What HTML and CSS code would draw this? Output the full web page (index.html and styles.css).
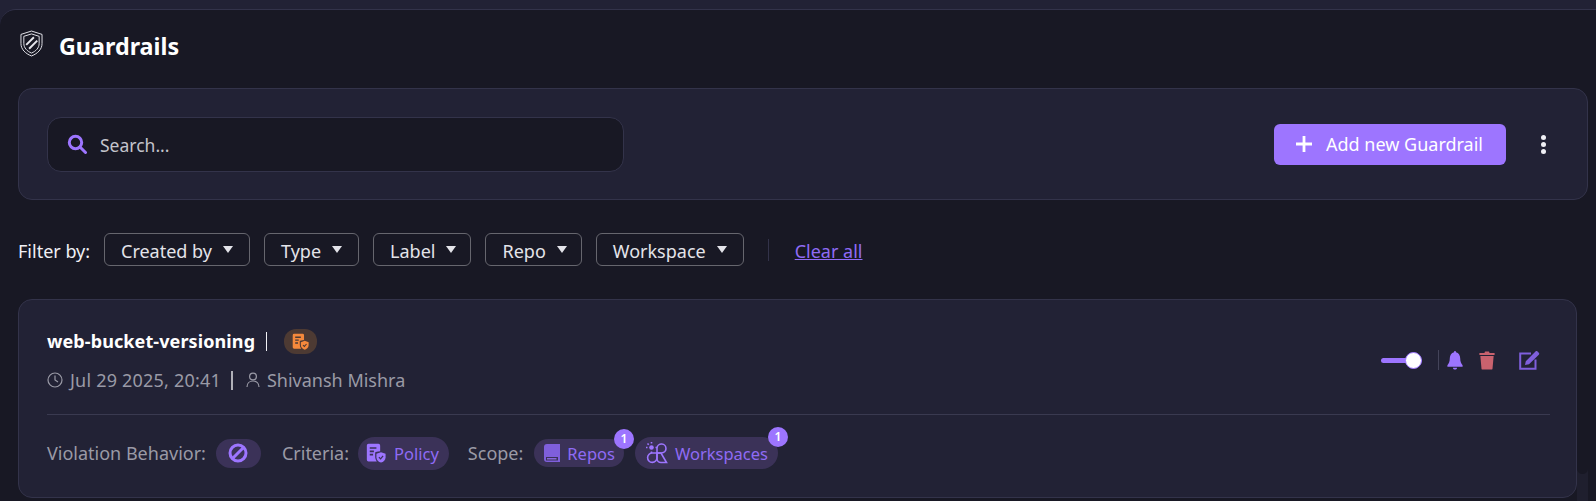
FILE: index.html
```html
<!DOCTYPE html>
<html>

<head>
<link rel="stylesheet" href="styles.css">
</head>

<body>
  <div class="panel">
    <div class="pagetitle">
      <svg class="titleicon" viewBox="0 0 24 28" fill="none" stroke="#e8e8ee" stroke-width="1">
        <path d="M12 1 L23 4.500 V14 C23 20 18.500 24.500 12 27 C5.500 24.500 1 20 1 14 V4.500 Z"/>
        <path d="M12 4 L20 6.500 V14 C20 18.600 16.600 22 12 24 C7.400 22 4 18.600 4 14 V6.500 Z"/>
        <path d="M6.500 15.500 L14.500 7.500 M9.500 19.500 L18 11" stroke-width="2"/>
      </svg>
      <h1>Guardrails</h1>
    </div>

    <div class="toolbar">
      <div class="searchbox">
        <svg class="searchicon" viewBox="0 0 20 20" fill="none" stroke="#9d75ff" stroke-width="3">
          <circle cx="8.500" cy="8.500" r="6.200"/>
          <path d="M13 13 L18.500 18.500" stroke-linecap="round"/>
        </svg>
        <span class="searchtext">Search...</span>
      </div>
      <div class="toolbaractions">
        <button class="addbutton">
          <svg viewBox="0 0 16 16" class="plusicon"><path d="M6.600 0h2.800v6.600H16v2.800H9.400V16H6.600V9.400H0V6.600h6.600z" fill="#fff"/></svg>
          Add new Guardrail
        </button>
        <span class="dots"><i></i><i></i><i></i></span>
      </div>
    </div>

    <div class="filters">
      <span class="filterlabel">Filter by:</span>
      <div class="filter">Created by <b></b></div>
      <div class="filter">Type <b></b></div>
      <div class="filter filtertight">Label <b></b></div>
      <div class="filter filtertight">Repo <b></b></div>
      <div class="filter">Workspace <b></b></div>
      <span class="filterdivider"></span>
      <a href="#clear" class="clearall">Clear all</a>
    </div>

    <div class="card">
      <div class="cardtop">
        <div>
          <div class="nameline">
            <strong>web-bucket-versioning</strong>
            <span class="namedivider"></span>
            <span class="typechip">
              <svg viewBox="0 0 24 24" class="typeicon">
                <path d="M3 1h12a2 2 0 0 1 2 2v7c-3 .3-6 1.200-6 1.200v5c0 2 .6 4 2 6H3a2 2 0 0 1-2-2V3a2 2 0 0 1 2-2z" fill="#f5893c"/>
                <path d="M4.500 6h8M4.500 10h5M4.500 14h4" stroke="#4d3a33" stroke-width="2"/>
                <path d="M18 11l5.500 2v4c0 3.500-2.500 5.500-5.500 6.500-3-1-5.500-3-5.500-6.500v-4z" fill="#f5893c"/>
                <path d="M15.500 17l2 2 3-3.500" stroke="#4d3a33" stroke-width="1.500" fill="none"/>
              </svg>
            </span>
          </div>
          <div class="metaline">
            <svg viewBox="0 0 16 16" class="metaicon" fill="none" stroke="#9a9aa6" stroke-width="1.200">
              <circle cx="8" cy="8" r="7"/>
              <path d="M8 3.500V8l3 2"/>
            </svg>
            <span class="metadate">Jul 29 2025, 20:41</span>
            <span class="metadivider"></span>
            <svg viewBox="0 0 14 16" class="usericon" fill="none" stroke="#9a9aa6" stroke-width="1.200">
              <circle cx="7" cy="4.500" r="3.400"/>
              <path d="M1 15c0-3.500 2.500-6 6-6s6 2.500 6 6"/>
            </svg>
            <span>Shivansh Mishra</span>
          </div>
        </div>
        <div class="cardactions">
          <span class="toggle"><i></i></span>
          <span class="actiondivider"></span>
          <svg viewBox="0 0 16 20" class="bell"><path d="M8 0c.7 0 1 .5 1 1.200C12 2 13.500 4.500 13.500 8c0 3 .8 5 2.500 7v1.500H0V15c1.700-2 2.500-4 2.500-7C2.500 4.500 4 2 7 1.200 7 .5 7.300 0 8 0zM5.800 17.500h4.400C10 19 9 19.600 8 19.600S6 19 5.800 17.500z" fill="#9d75ff"/></svg>
          <svg viewBox="0 0 16 20" class="trash"><path d="M5.500 1.500C5.500.8 6 .5 6.500.5h3c.5 0 1 .3 1 1V2H16v2.200H0V2h5.500zM1 5.200h14L13.800 18.600c-.1.600-.5 1-1.200 1H3.400c-.7 0-1.100-.4-1.200-1z" fill="#c9626e"/></svg>
          <svg viewBox="0 0 22 20" class="edit">
            <path d="M12 3.500H1.200v15.300h15.300V9.500" fill="none" stroke="#7f5fdc" stroke-width="2"/>
            <path d="M6 15l.8-3.800L16.500 1.500c.6-.6 1.500-.6 2 0l1.300 1.300c.6.600.6 1.400 0 2L10 14.300z" fill="#7f5fdc"/>
          </svg>
        </div>
      </div>

      <div class="cardbottom">
        <span class="fieldlabel">Violation Behavior:</span>
        <span class="chip chipviolation">
          <svg viewBox="0 0 20 20" class="chipicon" fill="none" stroke="#9d75ff" stroke-width="3">
            <circle cx="10" cy="10" r="8"/>
            <path d="M4.500 15.500L15.500 4.500"/>
          </svg>
        </span>
        <span class="fieldlabel criteria">Criteria:</span>
        <span class="chip chippolicy">
          <svg viewBox="0 0 24 24" class="chipicon">
            <path d="M3 1h12a2 2 0 0 1 2 2v7c-3 .3-6 1.200-6 1.200v5c0 2 .6 4 2 6H3a2 2 0 0 1-2-2V3a2 2 0 0 1 2-2z" fill="#9d75ff"/>
            <path d="M4.500 6h8M4.500 10h5M4.500 14h4" stroke="#3b3258" stroke-width="2"/>
            <path d="M18 11l5.500 2v4c0 3.500-2.500 5.500-5.500 6.500-3-1-5.500-3-5.500-6.500v-4z" fill="#9d75ff"/>
            <path d="M15.500 17l2 2 3-3.500" stroke="#3b3258" stroke-width="1.500" fill="none"/>
          </svg>
          Policy
        </span>
        <span class="fieldlabel scope">Scope:</span>
        <span class="chip chiprepos">
          <svg viewBox="0 0 16 18" class="repoicon">
            <path d="M3 0h13v18H3a3 3 0 0 1-3-3V3a3 3 0 0 1 3-3z" fill="#7f5fdc"/>
            <path d="M2 13h12v3.500H2z" fill="#3b3258"/>
            <path d="M3 14.200h9.500v1.200H3z" fill="#9d75ff"/>
          </svg>
          Repos
          <span class="countbadge">1</span>
        </span>
        <span class="chip chipworkspaces">
          <svg viewBox="0 0 22 22" class="workspaceicon" fill="none" stroke="#9d75ff" stroke-width="1.600">
            <circle cx="5.500" cy="5.500" r="2.300" fill="#9d75ff" stroke="none"/>
            <path d="M5.500 0v1.500M0 5.500h1.500M1.500 1.500l1.200 1.200M9.500 5.500h1.500M5.500 9.500V11"/>
            <path d="M11 11V6a4.500 4.500 0 1 1 4.500 5z"/>
            <path d="M11 11H6.500a4.700 4.700 0 1 0 4.500 4.700z"/>
            <path d="M11 11h4l5.500 9.500H15a4 4 0 0 1-4-4z"/>
          </svg>
          Workspaces
          <span class="countbadge">1</span>
        </span>
      </div>
    </div>
  </div>
  <div class="scrolltrack"></div>
</body>
</html>
```

FILE: styles.css
```css
* {
  box-sizing: border-box;
}

body {
  margin: 0;
  padding-top: 9px;
  background-color: #222235;
  font-family: "Noto Sans", "Open Sans", sans-serif;
  overflow: hidden;
  color: #fff;
}

/* Main dark panel */
.panel {
  height: 492px;
  padding: 0 8px 0 18px;
  background-color: #181824;
  border-top: 1px solid #33334a;
  border-top-left-radius: 16px;
}

.pagetitle {
  display: flex;
  align-items: center;
  gap: 16px;
  height: 78px;
  padding: 0 0 6px 2px;
}

.titleicon {
  width: 23px;
  height: 27px;
  margin-bottom: 5px;
}

.pagetitle h1 {
  margin: 0;
  font-size: 23.300px;
  font-weight: 700;
}

/* Search bar and add button */
.toolbar {
  display: flex;
  justify-content: space-between;
  align-items: center;
  height: 112px;
  padding: 0 41px 0 28px;
  background-color: #222235;
  border: 1px solid #33334a;
  border-radius: 14px;
}

.searchbox {
  display: flex;
  align-items: center;
  gap: 13px;
  width: 577px;
  height: 55px;
  padding: 0 19px;
  background-color: #181824;
  border: 1px solid #33334a;
  border-radius: 14px;
  color: #c4c4cc;
  font-size: 17.500px;
}

.searchtext {
  padding-top: 2px;
}

.searchicon {
  width: 20px;
  height: 20px;
}

.toolbaractions {
  display: flex;
  align-items: center;
  gap: 35px;
}

.addbutton {
  display: flex;
  align-items: center;
  gap: 14px;
  width: 232px;
  height: 41px;
  padding: 0 22px;
  background-color: #9d75ff;
  border: none;
  border-radius: 6px;
  color: #fff;
  font-family: inherit;
  font-size: 18px;
}

.plusicon {
  width: 16px;
  height: 16px;
}

.dots {
  display: flex;
  flex-direction: column;
  gap: 2px;
}

.dots i {
  width: 5px;
  height: 5px;
  border-radius: 50%;
  background-color: #f0f0f5;
}

/* Filter row */
.filters {
  display: flex;
  align-items: center;
  height: 99px;
  font-size: 18px;
  color: #f0f0f5;
}

.filterlabel {
  width: 86px;
  padding-top: 2px;
}

.filter {
  display: flex;
  align-items: center;
  justify-content: space-between;
  height: 33px;
  margin-right: 14px;
  padding: 2px 16px 0 16px;
  border: 1px solid #66666e;
  border-radius: 6px;
  color: #e4e4ea;
}

.filtertight {
  padding-right: 14px;
}

.filter b {
  width: 0;
  height: 0;
  margin-left: 11px;
  margin-top: -3px;
  border-left: 5px solid transparent;
  border-right: 5px solid transparent;
  border-top: 7px solid #e4e4ea;
}

.filterdivider {
  width: 1px;
  height: 22px;
  margin: 0 26px 0 10px;
  background-color: #33334a;
}

.clearall {
  padding-top: 2px;
  color: #8f6bf5;
}

/* Guardrail card */
.card {
  width: 1559px;
  height: 199px;
  padding: 0 26px 0 28px;
  background-color: #222235;
  border: 1px solid #33334a;
  border-radius: 14px;
}

.cardtop {
  display: flex;
  justify-content: space-between;
  align-items: center;
  height: 115px;
  padding-top: 6px;
  border-bottom: 1px solid #3a3a50;
}

.nameline {
  display: flex;
  align-items: center;
  height: 26px;
  font-size: 18px;
}

.nameline strong {
  font-weight: 700;
  letter-spacing: .1px;
}

.namedivider {
  width: 1px;
  height: 19px;
  margin: 0 17px 0 11px;
  background-color: #f0f0f5;
}

.typechip {
  display: flex;
  align-items: center;
  justify-content: center;
  width: 33px;
  height: 25px;
  border-radius: 12px;
  background-color: #4d3a33;
}

.typeicon {
  width: 17px;
  height: 17px;
}

.metaline {
  display: flex;
  align-items: center;
  margin-top: 14px;
  font-size: 18px;
  color: #9a9aa6;
}

.metadate {
  letter-spacing: .2px;
}

.metaicon {
  width: 16px;
  height: 16px;
  margin-right: 7px;
}

.metadivider {
  width: 2px;
  height: 19px;
  margin: 0 13px 0 10px;
  background-color: #b0b0b8;
}

.usericon {
  width: 14px;
  height: 16px;
  margin-right: 7px;
}

.cardactions {
  display: flex;
  align-items: center;
  margin-right: 9px;
}

.toggle {
  position: relative;
  display: block;
  width: 41px;
  height: 5px;
  border-radius: 3px;
  background-color: #9d75ff;
}

.toggle i {
  position: absolute;
  right: 0;
  top: -6px;
  width: 17px;
  height: 17px;
  border-radius: 50%;
  background-color: #fff;
  border: 1px solid #9d75ff;
}

.actiondivider {
  width: 1px;
  height: 20px;
  margin: 0 8px 0 16px;
  background-color: #44445a;
}

.bell {
  width: 16px;
  height: 19px;
  margin-right: 16px;
}

.trash {
  width: 16px;
  height: 19px;
  margin-right: 24px;
}

.edit {
  width: 22px;
  height: 20px;
}

.cardbottom {
  display: flex;
  align-items: center;
  height: 81px;
  padding-bottom: 5px;
  font-size: 18px;
}

.fieldlabel {
  color: #9a9aa6;
}

.criteria {
  margin-left: 21px;
}

.scope {
  margin-left: 19px;
}

/* Pill shaped chips */
.chip {
  position: relative;
  display: flex;
  align-items: center;
  margin-left: 11px;
  border-radius: 17px;
  background-color: #3b3258;
  color: #8f6bf5;
  font-size: 16.500px;
}

.chipviolation {
  justify-content: center;
  width: 45px;
  height: 29px;
  margin-left: 10px;
}

.chippolicy {
  gap: 8px;
  height: 33px;
  margin-left: 9px;
  padding: 0 10px 0 8px;
}

.chiprepos {
  gap: 7px;
  height: 28px;
  padding: 0 9px 0 10px;
}

.chipworkspaces {
  gap: 7px;
  height: 32px;
  padding: 0 10px 0 11px;
}

.chipicon {
  width: 20px;
  height: 20px;
}

.repoicon {
  width: 16px;
  height: 18px;
}

.workspaceicon {
  width: 22px;
  height: 22px;
}

.countbadge {
  position: absolute;
  right: -10px;
  top: -10px;
  width: 20px;
  height: 20px;
  border-radius: 50%;
  background-color: #9d75ff;
  color: #fff;
  font-size: 12px;
  font-weight: 600;
  line-height: 20px;
  text-align: center;
}

/* Scrollbar track showing below the thumb */
.scrolltrack {
  position: absolute;
  top: 462px;
  right: 8px;
  width: 11px;
  height: 39px;
  background-color: #1f1f2e;
}

.scrolltrack::before {
  content: "";
  display: block;
  height: 12px;
  border-radius: 0 0 6px 6px;
  background-color: #181824;
}
```
